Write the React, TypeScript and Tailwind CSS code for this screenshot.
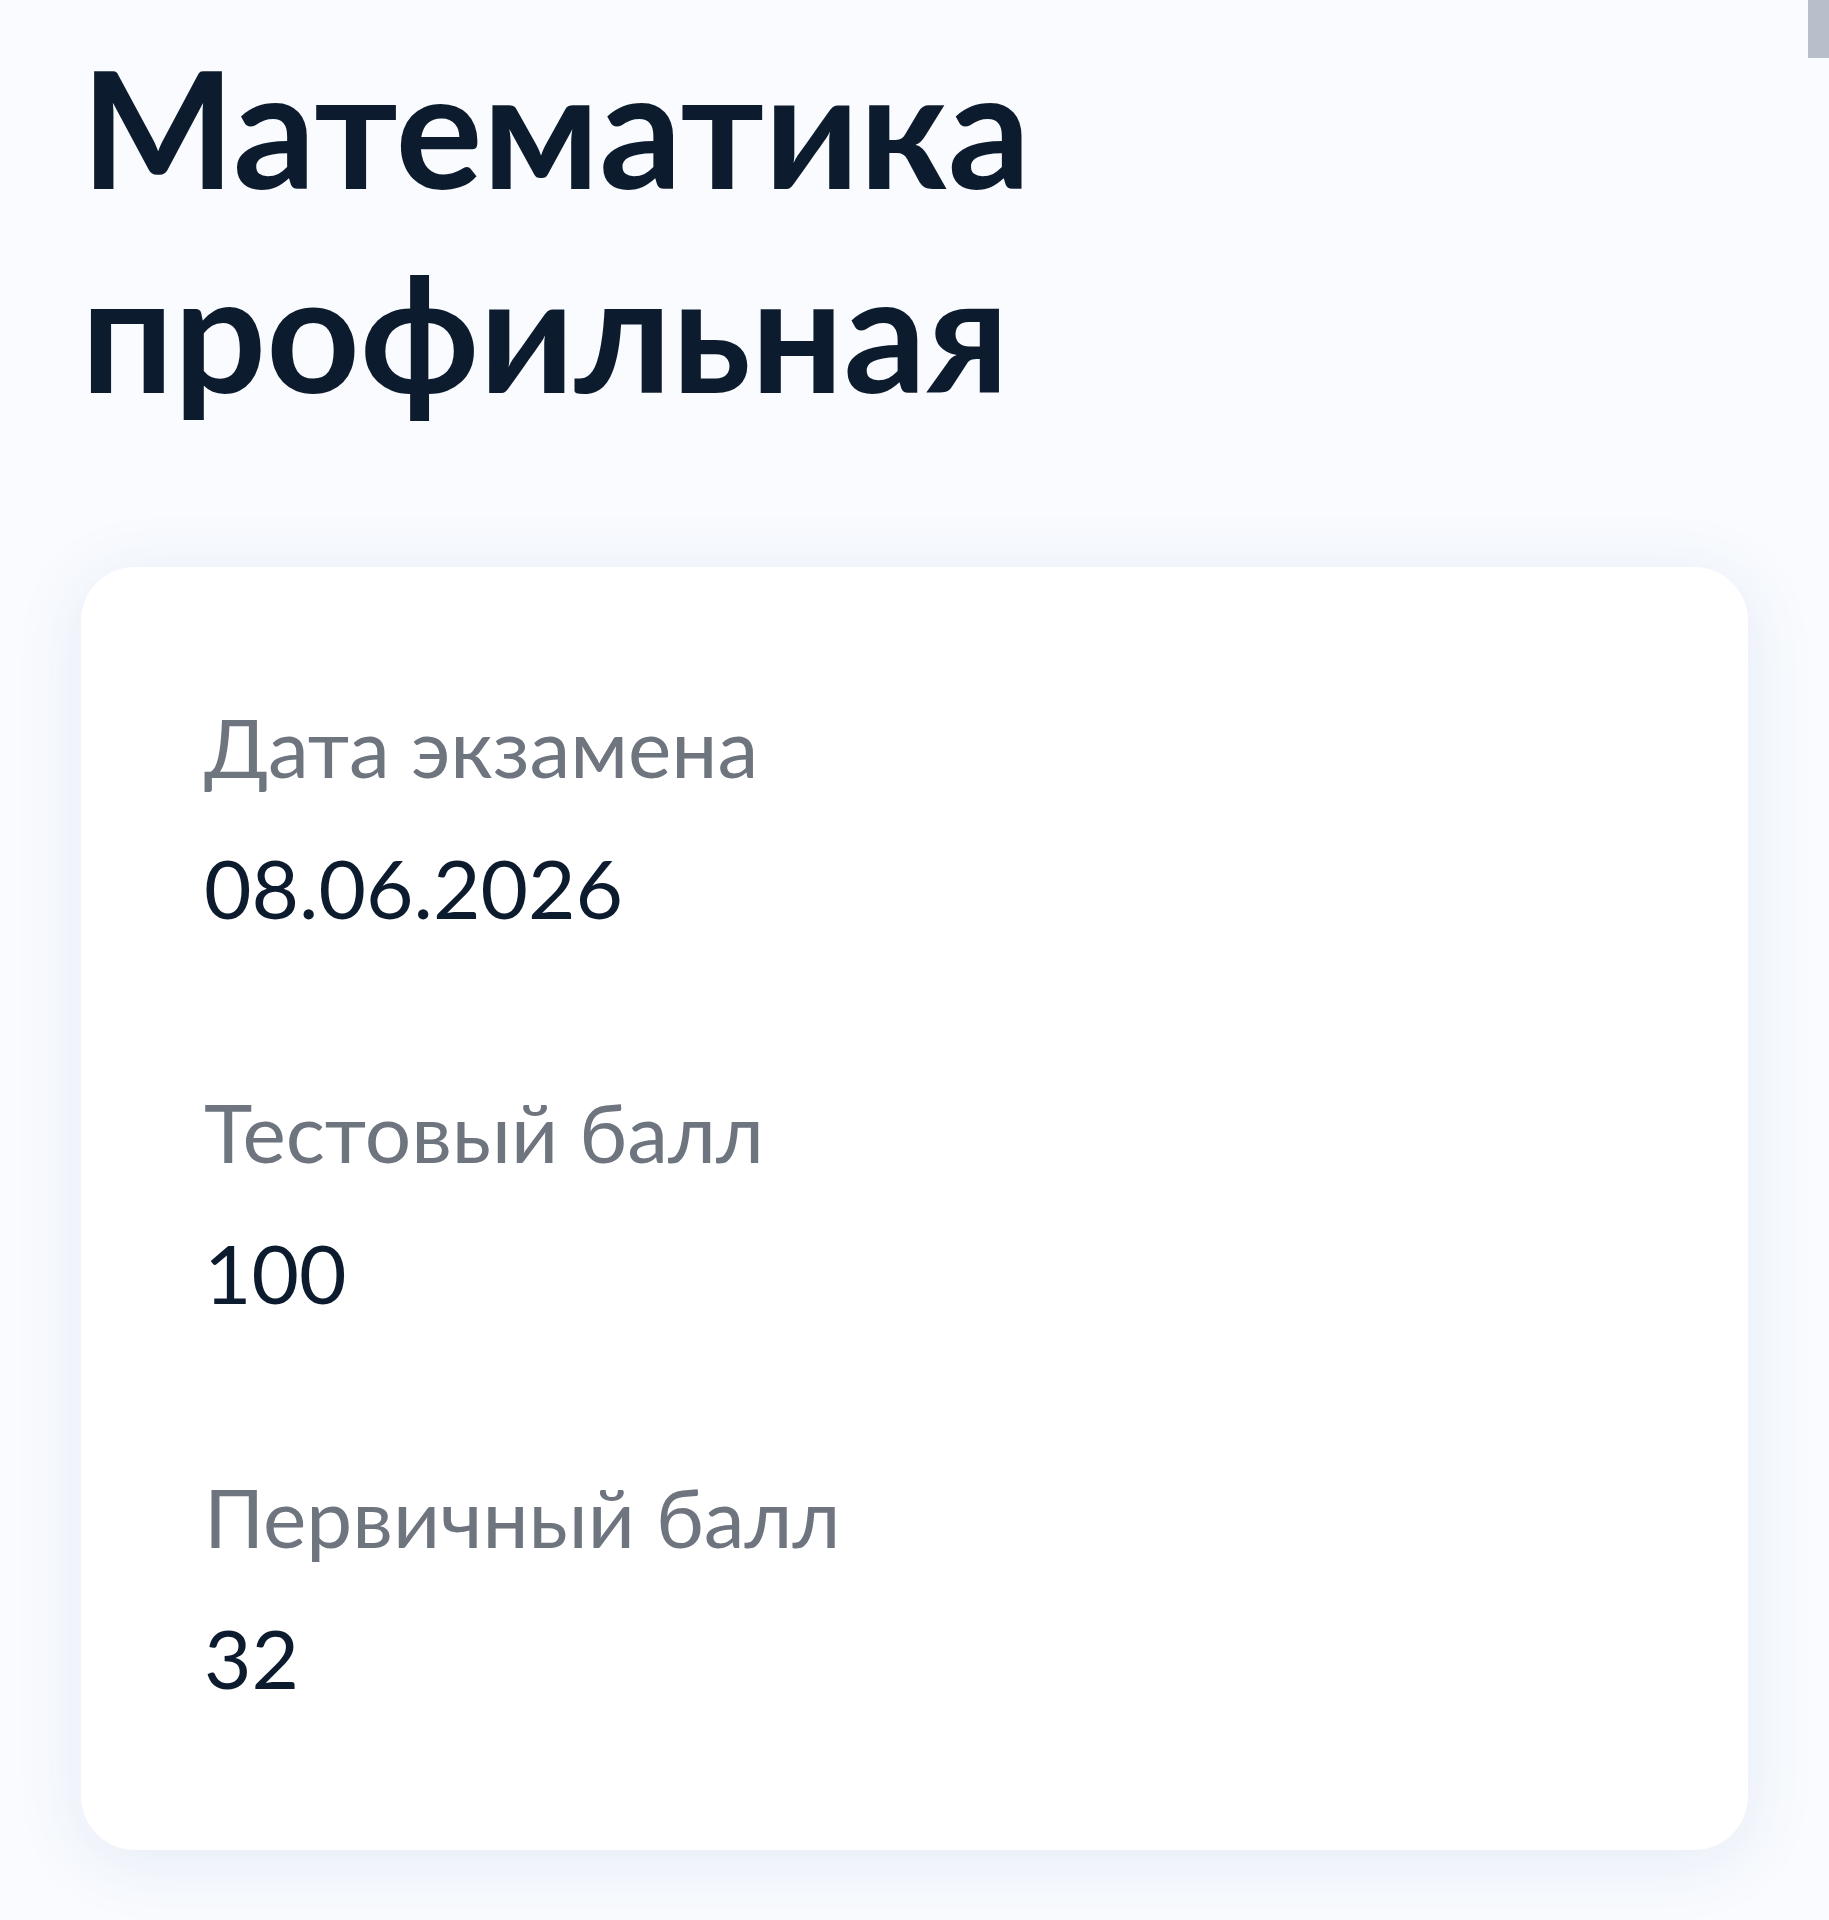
import React from 'react';

const rows = [
  { label: 'Дата экзамена', value: '08.06.2026' },
  { label: 'Тестовый балл', value: '100' },
  { label: 'Первичный балл', value: '32' },
];

function ResultCard() {
  return (
    <div className="rounded-[54px] bg-white pl-[123px] pr-[120px] pt-[125px] pb-[139px] shadow-[0_10px_70px_rgba(52,86,180,0.10)]">
      <div className="flex flex-col gap-[136px]">
        {rows.map((r) => (
          <div key={r.label} className="flex flex-col gap-[33px]">
            <div className="text-[82px] leading-[108px] text-[#6e757f]">{r.label}</div>
            <div className="text-[82px] leading-[108px] text-[#0c1c2e]">{r.value}</div>
          </div>
        ))}
      </div>
    </div>
  );
}

export default function App() {
  return (
    <div
      className="relative min-h-screen bg-[#f9fbfe] px-[81px] pt-[24px]"
      style={{ fontFamily: 'Lato, "Noto Sans", sans-serif' }}
    >
      <h1 className="text-[163px] font-bold leading-[204px] text-[#0c1c2e]">
        Математика
        <br />
        профильная
      </h1>

      <div className="mt-[135px]">
        <ResultCard />
      </div>

      {/* scrollbar thumb */}
      <div className="absolute right-0 top-0 h-[58px] w-[21px] bg-[#b9bfca]" />
    </div>
  );
}
